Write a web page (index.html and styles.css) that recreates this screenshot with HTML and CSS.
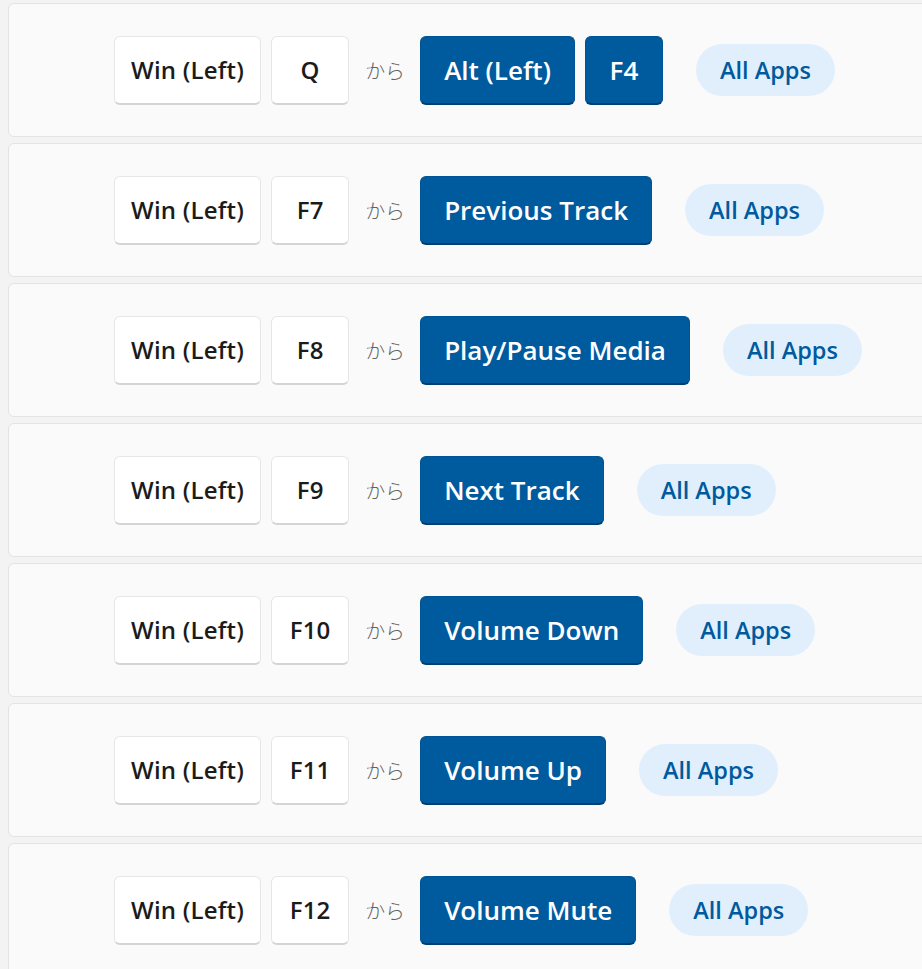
FILE: index.html
```html
<!DOCTYPE html>
<html lang="ja">
<head>
<meta charset="utf-8">
<link rel="stylesheet" href="styles.css">
</head>
<body>
<div class="list">
  <div class="card">
    <div class="row">
      <span class="key">Win (Left)</span><span class="key">Q</span>
      <span class="from">から</span>
      <span class="key target">Alt (Left)</span><span class="key target">F4</span>
      <span class="pill">All Apps</span>
    </div>
  </div>
  <div class="card">
    <div class="row">
      <span class="key">Win (Left)</span><span class="key">F7</span>
      <span class="from">から</span>
      <span class="key target">Previous Track</span>
      <span class="pill">All Apps</span>
    </div>
  </div>
  <div class="card">
    <div class="row">
      <span class="key">Win (Left)</span><span class="key">F8</span>
      <span class="from">から</span>
      <span class="key target">Play/Pause Media</span>
      <span class="pill">All Apps</span>
    </div>
  </div>
  <div class="card">
    <div class="row">
      <span class="key">Win (Left)</span><span class="key">F9</span>
      <span class="from">から</span>
      <span class="key target">Next Track</span>
      <span class="pill">All Apps</span>
    </div>
  </div>
  <div class="card">
    <div class="row">
      <span class="key">Win (Left)</span><span class="key">F10</span>
      <span class="from">から</span>
      <span class="key target">Volume Down</span>
      <span class="pill">All Apps</span>
    </div>
  </div>
  <div class="card">
    <div class="row">
      <span class="key">Win (Left)</span><span class="key">F11</span>
      <span class="from">から</span>
      <span class="key target">Volume Up</span>
      <span class="pill">All Apps</span>
    </div>
  </div>
  <div class="card">
    <div class="row">
      <span class="key">Win (Left)</span><span class="key">F12</span>
      <span class="from">から</span>
      <span class="key target">Volume Mute</span>
      <span class="pill">All Apps</span>
    </div>
  </div>
</div>
</body>
</html>
```
FILE: styles.css
```css
html, body {
  margin: 0;
  padding: 0;
  background: #f3f3f3;
  overflow: hidden;
}
body {
  padding: 3px 0 0 8px;
  font-family: "Open Sans", "Noto Sans", "Noto Sans CJK JP", sans-serif;
}
.list {
  display: flex;
  flex-direction: column;
  gap: 6px;
  width: 960px;
}
.card {
  background: #fafafa;
  border: 1px solid #e3e3e3;
  border-radius: 6px;
  box-sizing: border-box;
  height: 134px;
  display: flex;
  align-items: center;
  padding-left: 105px;
}
.row {
  display: flex;
  align-items: center;
}
.key {
  box-sizing: border-box;
  height: 69px;
  min-width: 78px;
  padding: 0 16px;
  margin-right: 10px;
  display: flex;
  align-items: center;
  justify-content: center;
  background: #ffffff;
  border: 1px solid #e6e6e6;
  border-bottom: 2px solid #d4d4d4;
  border-radius: 6px;
  font-size: 24px;
  font-weight: 600;
  color: #1b1b1b;
  letter-spacing: 0.2px;
}
.key.target {
  background: #005a9e;
  border: 1px solid #005394;
  border-bottom: 2px solid #003f70;
  color: #ffffff;
  font-size: 26px;
  letter-spacing: 0;
  padding: 0 23px;
}
.from {
  font-family: "Noto Sans CJK JP", sans-serif;
  font-size: 20px;
  color: #626262;
  font-weight: 300;
  margin: 0 15px 0 6px;
}
.pill {
  margin-left: 23px;
  height: 52px;
  padding: 0 24px;
  border-radius: 26px;
  background: #e1effd;
  color: #005a9e;
  font-size: 23.5px;
  font-weight: 600;
  display: flex;
  align-items: center;
}
```
